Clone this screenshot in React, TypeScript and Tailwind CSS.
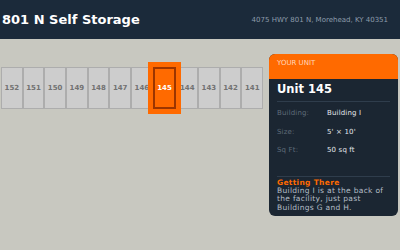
const units = ['152', '151', '150', '149', '148', '147', '146', '145', '144', '143', '142', '141'];

function Unit({ num, active }: { num: string; active?: boolean }) {
  if (active) {
    return (
      <div className="relative z-10 flex h-[42px] flex-1 items-center justify-center border-2 border-[#9c3500] bg-[#ff6a00] outline-[5px] outline-solid outline-[#ff6a00] text-[7px] font-bold text-white">
        {num}
      </div>
    );
  }
  return (
    <div className="flex h-[42px] flex-1 items-center justify-center border border-[#adadad] bg-[#cdcdcd] text-[7px] font-bold text-[#727272]">
      {num}
    </div>
  );
}

export default function App() {
  return (
    <div className="flex h-[250px] w-[400px] flex-col overflow-hidden bg-[#c8c8c0] font-['DejaVu_Sans',sans-serif]">
      {/* Header */}
      <div className="flex h-[39px] shrink-0 items-center justify-between bg-[#1b2a3a] pl-[2px] pr-[12px]">
        <h1 className="text-[13px] font-bold text-white">801 N Self Storage</h1>
        <span className="mt-[1px] text-[7px] text-[#8d9cab]">4075 HWY 801 N, Morehead, KY 40351</span>
      </div>

      <div className="flex items-start pl-[1px] pt-[15px]">
        {/* Unit row */}
        <div className="mt-[13px] flex w-[262px]">
          {units.map((u) => (
            <Unit key={u} num={u} active={u === '145'} />
          ))}
        </div>

        {/* Unit panel */}
        <div className="ml-[6px] flex h-[162px] w-[129px] flex-col overflow-hidden rounded-[6px] bg-[#1b2632]">
          <div className="h-[25px] shrink-0 bg-[#ff6a00] px-[8px] pt-[4px] text-[7px] uppercase text-[#ffd6bb]">
            Your Unit
          </div>
          <div className="px-[8px]">
            <div className="border-b border-[#2f3d4c] pb-[3px] pt-[2px] text-[11.5px] font-bold leading-[17px] text-white">Unit 145</div>
            <div className="flex flex-col pt-[2px] text-[7px] tracking-[0.15px]">
              <div className="flex h-[18.5px] items-center">
                <span className="w-[50px] text-[#5f6c79]">Building:</span>
                <span className="text-[#e4e8ec]">Building I</span>
              </div>
              <div className="flex h-[18.5px] items-center">
                <span className="w-[50px] text-[#5f6c79]">Size:</span>
                <span className="text-[#e4e8ec]">5' × 10'</span>
              </div>
              <div className="flex h-[18.5px] items-center">
                <span className="w-[50px] text-[#5f6c79]">Sq Ft:</span>
                <span className="text-[#e4e8ec]">50 sq ft</span>
              </div>
            </div>
            <div className="mt-[16px] border-t border-[#2f3d4c] pt-[1px] tracking-[0.3px]">
              <div className="text-[7.5px] font-bold leading-[9px] text-[#ff6a00]">Getting There</div>
              <p className="text-[7.5px] leading-[8.5px] text-[#b5bec7]">
                Building I is at the back of
                <br />
                the facility, just past
                <br />
                Buildings G and H.
              </p>
            </div>
          </div>
        </div>
      </div>
    </div>
  );
}
